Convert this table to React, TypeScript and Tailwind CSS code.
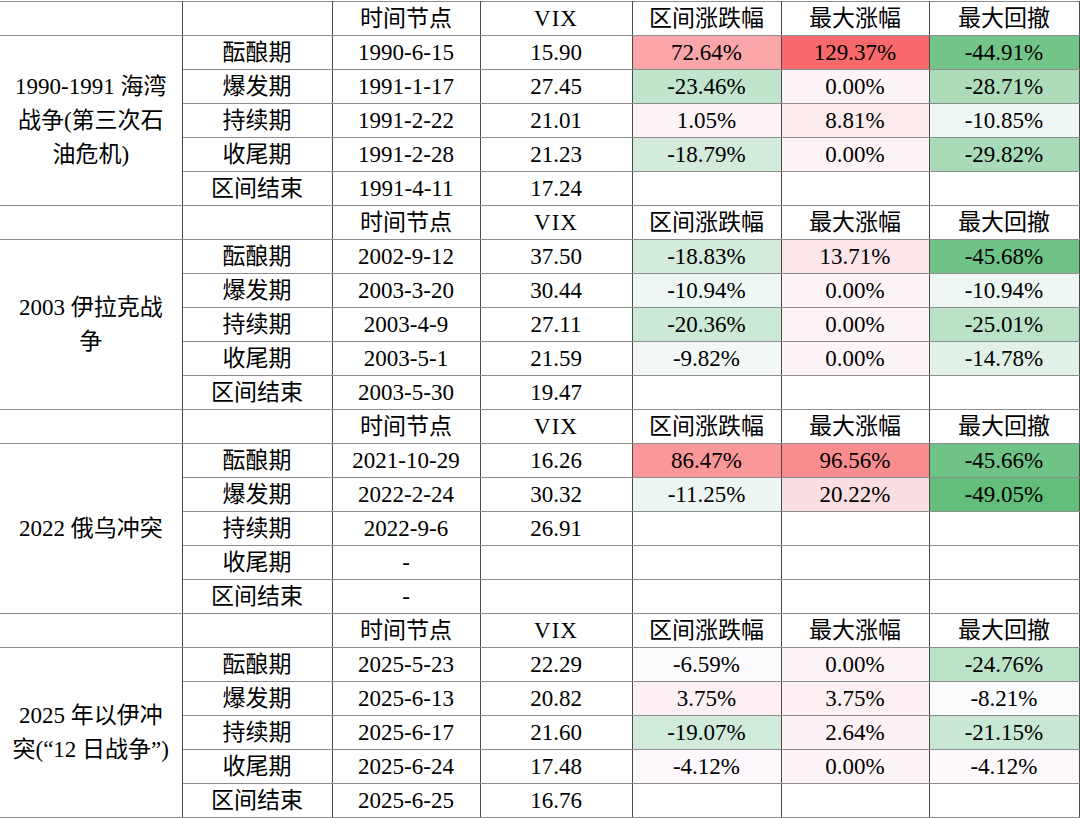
type Row = [string, string, string, number | null, number | null, number | null];

type Section = { event: string[]; rows: Row[] };

const sections: Section[] = [
  {
    event: ["1990-1991 海湾", "战争(第三次石", "油危机)"],
    rows: [
      ["酝酿期", "1990-6-15", "15.90", 72.64, 129.37, -44.91],
      ["爆发期", "1991-1-17", "27.45", -23.46, 0, -28.71],
      ["持续期", "1991-2-22", "21.01", 1.05, 8.81, -10.85],
      ["收尾期", "1991-2-28", "21.23", -18.79, 0, -29.82],
      ["区间结束", "1991-4-11", "17.24", null, null, null],
    ],
  },
  {
    event: ["2003 伊拉克战", "争"],
    rows: [
      ["酝酿期", "2002-9-12", "37.50", -18.83, 13.71, -45.68],
      ["爆发期", "2003-3-20", "30.44", -10.94, 0, -10.94],
      ["持续期", "2003-4-9", "27.11", -20.36, 0, -25.01],
      ["收尾期", "2003-5-1", "21.59", -9.82, 0, -14.78],
      ["区间结束", "2003-5-30", "19.47", null, null, null],
    ],
  },
  {
    event: ["2022 俄乌冲突"],
    rows: [
      ["酝酿期", "2021-10-29", "16.26", 86.47, 96.56, -45.66],
      ["爆发期", "2022-2-24", "30.32", -11.25, 20.22, -49.05],
      ["持续期", "2022-9-6", "26.91", null, null, null],
      ["收尾期", "-", "", null, null, null],
      ["区间结束", "-", "", null, null, null],
    ],
  },
  {
    event: ["2025 年以伊冲", "突(“12 日战争”)"],
    rows: [
      ["酝酿期", "2025-5-23", "22.29", -6.59, 0, -24.76],
      ["爆发期", "2025-6-13", "20.82", 3.75, 3.75, -8.21],
      ["持续期", "2025-6-17", "21.60", -19.07, 2.64, -21.15],
      ["收尾期", "2025-6-24", "17.48", -4.12, 0, -4.12],
      ["区间结束", "2025-6-25", "16.76", null, null, null],
    ],
  },
];

// three-colour scale: green (min) -> white (median) -> red (max)
const all = sections.flatMap((s) =>
  s.rows.flatMap((r) => [r[3], r[4], r[5]]).filter((v): v is number => v !== null)
);
const sorted = [...all].sort((a, b) => a - b);
const lo = sorted[0];
const hi = sorted[sorted.length - 1];
const m = (sorted.length - 1) / 2;
const mid = (sorted[Math.floor(m)] + sorted[Math.ceil(m)]) / 2;

const WHITE = [252, 252, 255];
const RED = [248, 105, 107];
const GREEN = [99, 190, 123];

function heat(v: number | null) {
  if (v === null) return undefined;
  const [to, t] = v >= mid ? [RED, (v - mid) / (hi - mid)] : [GREEN, (mid - v) / (mid - lo)];
  const c = WHITE.map((w, i) => Math.round(w + (to[i] - w) * t));
  return `rgb(${c[0]}, ${c[1]}, ${c[2]})`;
}

const pct = (v: number | null) => (v === null ? "" : `${v.toFixed(2)}%`);

const cell = "h-[34px] p-0 text-center align-middle border-x border-x-[#4a4a4a] border-y border-y-[#8c8c8c] font-normal";

export default function App() {
  return (
    <div className="min-h-[818px] w-[1080px] bg-white pt-px font-[family-name:Liberation_Serif,Noto_Sans_CJK_SC,serif] text-[23px] leading-none text-black">
      <table className="w-[1079px] table-fixed border-collapse">
        <colgroup>
          <col className="w-[182px]" />
          <col className="w-[150px]" />
          <col className="w-[148px]" />
          <col className="w-[152px]" />
          <col className="w-[149px]" />
          <col className="w-[148px]" />
          <col className="w-[150px]" />
        </colgroup>
        <tbody>
          {sections.map((s) => (
            <SectionRows key={s.event.join("")} section={s} />
          ))}
        </tbody>
      </table>
    </div>
  );
}

function SectionRows({ section }: { section: Section }) {
  return (
    <>
      {/* header row */}
      <tr>
        <th className={`${cell} border-l-0`} />
        <th className={cell} />
        <th className={cell}>时间节点</th>
        <th className={`${cell} tracking-[1px]`}>VIX</th>
        <th className={cell}>区间涨跌幅</th>
        <th className={cell}>最大涨幅</th>
        <th className={cell}>最大回撤</th>
      </tr>
      {section.rows.map((r, i) => (
        <tr key={r[0]}>
          {i === 0 && (
            <td rowSpan={section.rows.length} className={`${cell} border-l-0 leading-[34px]`}>
              {section.event.map((line) => (
                <div key={line}>{line}</div>
              ))}
            </td>
          )}
          <td className={cell}>{r[0]}</td>
          <td className={cell}>{r[1]}</td>
          <td className={cell}>{r[2]}</td>
          {[r[3], r[4], r[5]].map((v, j) => (
            <td key={j} className={cell} style={{ backgroundColor: heat(v) }}>
              {pct(v)}
            </td>
          ))}
        </tr>
      ))}
    </>
  );
}
